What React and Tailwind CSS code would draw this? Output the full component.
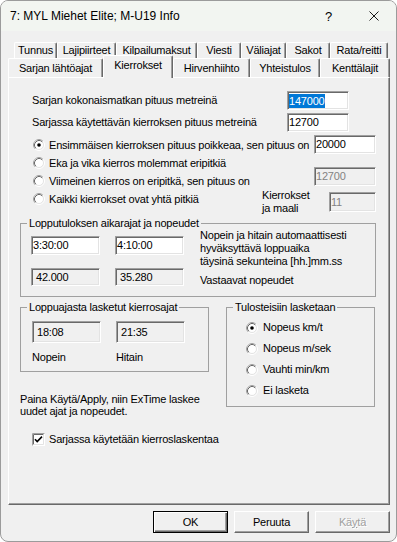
import React from "react";

// classic property sheet: "Kierrokset" page

const TOP_TABS = [
  { label: "Tunnus", w: "w-[43px]" },
  { label: "Lajipiirteet", w: "w-[59px]" },
  { label: "Kilpailumaksut", w: "w-[81px]" },
  { label: "Viesti", w: "w-[44px]" },
  { label: "Väliajat", w: "w-[45px]" },
  { label: "Sakot", w: "w-[44px]" },
  { label: "Rata/reitti", w: "w-[58px]" },
];

const BOTTOM_TABS = [
  { label: "Sarjan lähtöajat", w: "w-[95px]" },
  { label: "Kierrokset", w: "w-[70px]", active: true },
  { label: "Hirvenhiihto", w: "w-[77px]" },
  { label: "Yhteistulos", w: "w-[70px]" },
  { label: "Kenttälajit", w: "w-[70px]" },
];

const LAP_OPTIONS = [
  { label: "Ensimmäisen kierroksen pituus poikkeaa, sen pituus on", checked: true },
  { label: "Eka ja vika kierros molemmat eripitkiä" },
  { label: "Viimeinen kierros on eripitkä, sen pituus on" },
  { label: "Kaikki kierrokset ovat yhtä pitkiä" },
];

const PRINT_OPTIONS = [
  { label: "Nopeus km/t", checked: true },
  { label: "Nopeus m/sek" },
  { label: "Vauhti min/km" },
  { label: "Ei lasketa" },
];

function Radio({ checked }) {
  return (
    <svg width="12" height="12" viewBox="0 0 12 12" className="shrink-0">
      <circle cx="6" cy="6" r="5.5" fill="none" stroke="#ffffff" />
      <path d="M2.11 9.89A5.5 5.5 0 0 1 9.89 2.11" fill="none" stroke="#a0a0a0" />
      <circle cx="6" cy="6" r="4.5" fill="#ffffff" stroke="#e3e3e3" />
      <path d="M2.82 9.18A4.5 4.5 0 0 1 9.18 2.82" fill="none" stroke="#696969" />
      {checked && <circle cx="6" cy="6" r="1.8" fill="#000000" />}
    </svg>
  );
}

function Checkbox() {
  return (
    <svg width="13" height="13" viewBox="0 0 13 13" className="shrink-0">
      <rect x="0" y="0" width="13" height="13" fill="#ffffff" />
      <path d="M0.5 12.5V0.5H12.5" fill="none" stroke="#a0a0a0" />
      <path d="M1.5 11.5V1.5H11.5" fill="none" stroke="#696969" />
      <path d="M1.5 11.5H11.5V1.5" fill="none" stroke="#e3e3e3" />
      <path d="M3 6.2L5.2 8.6L10 3.6" fill="none" stroke="#000000" strokeWidth="1.6" />
    </svg>
  );
}

function Field({ value, tone = "edit", selected, className }) {
  const look =
    tone === "edit"
      ? "bg-white text-black pl-[1px]"
      : tone === "disabled"
      ? "bg-[#f0f0f0] text-[#838383] pl-[1px]"
      : "bg-[#f0f0f0] text-black pl-[4px]";
  return (
    <div
      className={`flex items-center shrink-0 border border-t-[#a0a0a0] border-l-[#a0a0a0] border-r-white border-b-white shadow-[inset_1px_1px_0_#696969,inset_-1px_-1px_0_#e3e3e3] ${look} ${className}`}
    >
      {selected ? <span className="bg-[#0078d7] text-white leading-[14px]">{value}</span> : value}
    </div>
  );
}

function Group({ title, className, children }) {
  return (
    <fieldset className={`border border-[#a0a0a0] ${className}`}>
      <legend className="ml-[6px] px-[2px] leading-[12px]">{title}</legend>
      {children}
    </fieldset>
  );
}

function Tab({ label, w, active }) {
  if (active) {
    return (
      <div
        className={`${w} h-[23px] -mt-[3px] relative z-10 bg-[#f0f0f0] flex justify-center pt-[3px] border-t border-l border-r border-t-white border-l-white border-r-[#696969] shadow-[inset_-1px_0_0_#a0a0a0] rounded-t-[2px]`}
      >
        {label}
      </div>
    );
  }
  return (
    <div
      className={`${w} h-full flex items-center justify-center border-t border-l border-r border-t-white border-l-white border-r-[#696969] shadow-[inset_-1px_0_0_#a0a0a0] rounded-t-[2px]`}
    >
      {label}
    </div>
  );
}

function Button({ children, isDefault, disabled }) {
  const frame = isDefault
    ? "border border-black shadow-[inset_1px_1px_0_#ffffff,inset_-1px_-1px_0_#696969,inset_-2px_-2px_0_#a0a0a0]"
    : "border border-t-white border-l-white border-r-[#696969] border-b-[#696969] shadow-[inset_-1px_-1px_0_#a0a0a0]";
  return (
    <div
      className={`w-[75px] h-[22px] flex items-center justify-center bg-[#f0f0f0] ${frame} ${
        disabled ? "text-[#a0a0a0] [text-shadow:1px_1px_0_#ffffff]" : "text-black"
      }`}
    >
      {children}
    </div>
  );
}

export default function App() {
  return (
    <div className="w-[397px] h-[542px] bg-white">
      <div className="w-full h-full flex flex-col rounded-[8px] overflow-hidden border border-[#9b9b9b] bg-[#f0f0f0] font-['Liberation_Sans',Arial,sans-serif] text-[11px] tracking-[-0.2px] text-black leading-[13px]">
        {/* title bar */}
        <div className="h-[30px] shrink-0 flex items-center bg-[#f2f5f1] text-[12px] tracking-normal">
          <div className="flex-1 pl-[9px]">7: MYL Miehet Elite; M-U19 Info</div>
          <div className="w-[45px] h-full flex items-center justify-center text-[13px]">?</div>
          <div className="w-[45px] h-full flex items-center justify-center">
            <svg width="10" height="10" viewBox="0 0 10 10">
              <path d="M0.5 0.5L9.5 9.5M9.5 0.5L0.5 9.5" stroke="#1a1a1a" strokeWidth="1" />
            </svg>
          </div>
        </div>

        {/* tabs + page */}
        <div className="pl-[7px] pt-[11px]">
          <div className="flex h-[16px] ml-[6px]">
            {TOP_TABS.map((t) => (
              <Tab key={t.label} {...t} />
            ))}
          </div>
          <div className="flex items-start h-[19px]">
            {BOTTOM_TABS.map((t) => (
              <Tab key={t.label} {...t} />
            ))}
          </div>

          <div className="w-[382px] h-[428px] flex flex-col pl-[11px] pr-[13px] pt-[13px] border border-t-white border-l-white border-r-[#696969] border-b-[#696969] shadow-[inset_-1px_-1px_0_#a0a0a0]">
            <div className="flex items-center h-[19px]">
              <div className="w-[267px] pl-[12px] whitespace-nowrap">Sarjan kokonaismatkan pituus metreinä</div>
              <Field value="147000" selected className="w-[62px] h-[19px]" />
            </div>
            <div className="flex items-center h-[19px] mt-[3px]">
              <div className="w-[267px] pl-[12px] whitespace-nowrap">Sarjassa käytettävän kierroksen pituus metreinä</div>
              <Field value="12700" className="w-[62px] h-[19px]" />
            </div>

            {/* lap length options */}
            <div className="flex mt-[3px]">
              <div className="w-[242px] shrink-0 flex flex-col pt-[1px] pl-[13px]">
                {LAP_OPTIONS.map((o) => (
                  <div key={o.label} className="h-[18px] flex items-center gap-[4px] whitespace-nowrap">
                    <Radio checked={o.checked} />
                    <span>{o.label}</span>
                  </div>
                ))}
              </div>
              <div className="w-[114px] shrink-0 flex flex-col">
                <Field value="20000" className="w-[62px] h-[19px] ml-[52px]" />
                <Field value="12700" tone="disabled" className="w-[62px] h-[19px] mt-[13px] ml-[52px]" />
                <div className="w-[114px] flex items-center mt-[3px]">
                  <div className="w-[67px] shrink-0 leading-[13px] whitespace-nowrap">
                    Kierrokset
                    <br />
                    ja maali
                  </div>
                  <Field value="11" tone="disabled" className="w-[47px] h-[20px]" />
                </div>
              </div>
            </div>

            {/* time limits */}
            <Group title="Lopputuloksen aikarajat ja nopeudet" className="mt-[2px] w-[356px]">
              <div className="flex pl-[10px] pb-[9px]">
                <div className="w-[69px] flex flex-col pt-[7px]">
                  <Field value="3:30:00" className="w-[69px] h-[19px]" />
                  <Field value="42.000" tone="readonly" className="w-[69px] h-[18px] mt-[13px]" />
                </div>
                <div className="w-[69px] ml-[15px] flex flex-col pt-[7px]">
                  <Field value="4:10:00" className="w-[69px] h-[19px]" />
                  <Field value="35.280" tone="readonly" className="w-[69px] h-[18px] mt-[13px]" />
                </div>
                <div className="ml-[16px] flex flex-col">
                  <div>Nopein ja hitain automaattisesti</div>
                  <div>hyväksyttävä loppuaika</div>
                  <div>täysinä sekunteina [hh.]mm.ss</div>
                  <div className="mt-[6px]">Vastaavat nopeudet</div>
                </div>
              </div>
            </Group>

            <div className="flex items-start mt-[4px]">
              <div className="flex flex-col">
                <Group title="Loppuajasta lasketut kierrosajat" className="w-[189px]">
                  <div className="flex pl-[11px] pt-[8px] pb-[7px]">
                    <div className="w-[69px] flex flex-col">
                      <Field value="18:08" tone="readonly" className="w-[69px] h-[22px]" />
                      <div className="mt-[8px]">Nopein</div>
                    </div>
                    <div className="w-[69px] ml-[15px] flex flex-col">
                      <Field value="21:35" tone="readonly" className="w-[69px] h-[22px]" />
                      <div className="mt-[8px]">Hitain</div>
                    </div>
                  </div>
                </Group>
                <div className="mt-[21px] leading-[12px]">
                  Paina Käytä/Apply, niin ExTime laskee
                  <br />
                  uudet ajat ja nopeudet.
                </div>
              </div>

              <Group title="Tulosteisiin lasketaan" className="w-[149px] ml-[17px]">
                <div className="flex flex-col pl-[19px] pt-[4px] pb-[5px]">
                  {PRINT_OPTIONS.map((o) => (
                    <div key={o.label} className="h-[21px] flex items-center gap-[5px]">
                      <Radio checked={o.checked} />
                      <span>{o.label}</span>
                    </div>
                  ))}
                </div>
              </Group>
            </div>

            <div className="flex items-center gap-[4px] mt-[15px] ml-[12px] h-[14px]">
              <Checkbox />
              <span>Sarjassa käytetään kierroslaskentaa</span>
            </div>
          </div>

          <div className="flex justify-end gap-[6px] mt-[6px] w-[382px]">
            <Button isDefault>OK</Button>
            <Button>Peruuta</Button>
            <Button disabled>
              Kä<span className="underline">y</span>tä
            </Button>
          </div>
        </div>
      </div>
    </div>
  );
}
